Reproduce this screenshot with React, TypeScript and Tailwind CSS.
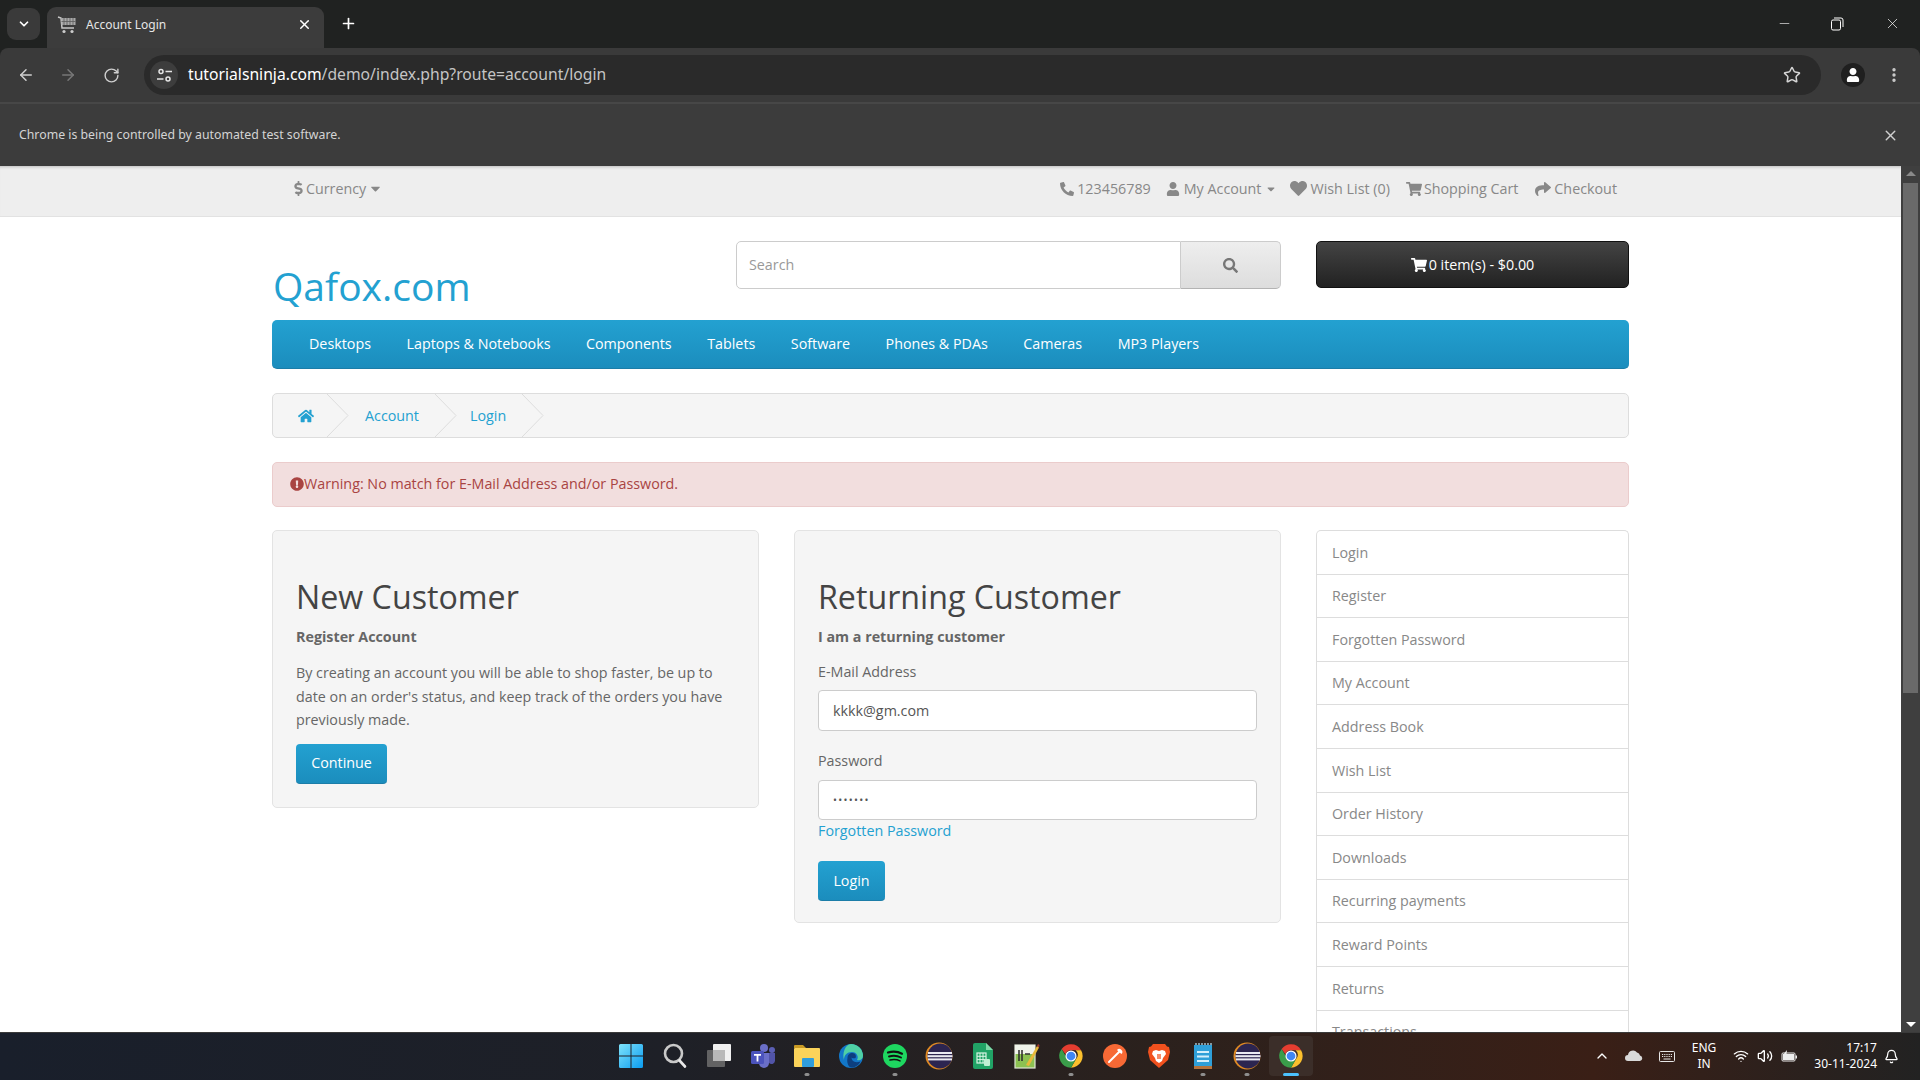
import React from "react";
import { FaPhone, FaUser, FaHeart, FaShoppingCart, FaShare, FaHome, FaSearch, FaExclamationCircle, FaCaretDown, FaDollarSign } from "react-icons/fa";
import { ChevronDown, X, Plus, ArrowLeft, ArrowRight, RotateCw, Star, EllipsisVertical, ChevronUp, Wifi, Volume2, Bell, Minus } from "lucide-react";

const side = ["Login","Register","Forgotten Password","My Account","Address Book","Wish List","Order History","Downloads","Recurring payments","Reward Points","Returns","Transactions"];
const nav = ["Desktops","Laptops & Notebooks","Components","Tablets","Software","Phones & PDAs","Cameras","MP3 Players"];

function Crumb() {
  return (
    <svg width="23" height="43" viewBox="0 0 23 43" className="shrink-0" fill="none">
      <path d="M1 0 L22 21.5 L1 43" stroke="#dddddd" strokeWidth="1" />
    </svg>
  );
}

function Chrome({ size = 32 }: { size?: number }) {
  return (
    <svg width={size} height={size} viewBox="0 0 48 48">
      <path d="M24 4a20 20 0 0 1 17.3 10H24a10 10 0 0 0-9.5 6.9L7.9 12A20 20 0 0 1 24 4z" fill="#e53d30" />
      <path d="M41.3 14A20 20 0 0 1 24 44l8.7-15a10 10 0 0 0-.7-15z" fill="#fbc02d" />
      <path d="M24 44A20 20 0 0 1 7.9 12l8.7 15A10 10 0 0 0 32.7 29L24 44z" fill="#3a9d4a" />
      <circle cx="24" cy="24" r="9.5" fill="#fff" />
      <circle cx="24" cy="24" r="7.5" fill="#3f86f4" />
    </svg>
  );
}

function Eclipse() {
  return (
    <svg width="28" height="28" viewBox="0 0 28 28">
      <circle cx="14" cy="14" r="13.5" fill="#e08a24" />
      <circle cx="15" cy="14" r="12.5" fill="#2c2550" />
      <rect x="3" y="10" width="24" height="2" fill="#e9e9f2" />
      <rect x="2.5" y="13.2" width="25" height="2" fill="#e9e9f2" />
      <rect x="3" y="16.4" width="24" height="2" fill="#e9e9f2" />
    </svg>
  );
}

function Cell({ children, dot, active }: { children: React.ReactNode; dot?: boolean; active?: boolean }) {
  return (
    <div className={`relative w-[44px] h-[40px] flex items-center justify-center rounded ${active ? "bg-[#3b2e29]" : ""}`}>
      {children}
      {dot && <span className="absolute bottom-[0px] left-1/2 -translate-x-1/2 w-[5px] h-[3px] rounded-full bg-[#8e8e8e]" />}
      {active && <span className="absolute bottom-[0px] left-1/2 -translate-x-1/2 w-[16px] h-[3px] rounded-full bg-[#4cc2ff]" />}
    </div>
  );
}

function Taskbar() {
  return (
    <div className="h-[48px] shrink-0 flex items-center pb-[1px] bg-[linear-gradient(90deg,#191f2b_0%,#1e2027_35%,#2b211d_60%,#3a1f16_83%,#222222_100%)] border-t border-[#3a3a3a] text-white font-['Noto_Sans',sans-serif]">
      <div className="ml-[609px] flex items-center">
        <Cell>
          <svg width="24" height="24" viewBox="0 0 24 24">
            <defs><linearGradient id="w" x1="0" y1="0" x2="1" y2="1"><stop offset="0" stopColor="#7fe3fb" /><stop offset="1" stopColor="#0a9cf0" /></linearGradient></defs>
            <path d="M0 1.5A1.5 1.5 0 0 1 1.5 0H11.5V11.5H0zM12.5 0H22.5A1.5 1.5 0 0 1 24 1.5V11.5H12.5zM0 12.5H11.5V24H1.5A1.5 1.5 0 0 1 0 22.5zM12.5 12.5H24V22.5A1.5 1.5 0 0 1 22.5 24H12.5z" fill="url(#w)" />
          </svg>
        </Cell>
        <Cell>
          <svg width="24" height="26" viewBox="0 0 24 26" fill="none">
            <circle cx="10.5" cy="10.5" r="8.5" stroke="#c9c9c9" strokeWidth="2.6" />
            <path d="M16.5 17.5L22 23.5" stroke="#e9e9e9" strokeWidth="2.6" strokeLinecap="round" />
          </svg>
        </Cell>
        <Cell>
          <svg width="24" height="24" viewBox="0 0 24 24">
            <rect x="6" y="0" width="18" height="17" rx="1" fill="#f0f0f0" />
            <rect x="0" y="6" width="18" height="17" rx="1" fill="#6f6f6f" fillOpacity="0.85" />
            <rect x="6" y="6" width="12" height="11" fill="#b8b8b8" />
          </svg>
        </Cell>
        <Cell>
          <svg width="26" height="26" viewBox="0 0 26 26">
            <circle cx="14" cy="5" r="4" fill="#6a6fc8" />
            <circle cx="22" cy="7" r="3" fill="#5b5fb5" />
            <path d="M9 10h10v10a5 5 0 0 1-10 0z" fill="#6a6fc8" />
            <path d="M19 10h6v8a3.500 3.500 0 0 1-6 2z" fill="#5154a8" />
            <rect x="1" y="8" width="13" height="13" rx="1.500" fill="#4b53bc" />
            <path d="M4 11h7v1.800H8.400V18.500H6.600V12.800H4z" fill="#fff" />
          </svg>
        </Cell>
        <Cell dot>
          <svg width="26" height="24" viewBox="0 0 26 24">
            <path d="M0 2a1 1 0 0 1 1-1h8l3 3H0z" fill="#c99a24" />
            <rect x="0" y="4" width="26" height="19" rx="1" fill="#fbd35a" />
            <rect x="8" y="14" width="12" height="9" rx="1" fill="#2f9ddc" />
          </svg>
        </Cell>
        <Cell>
          <svg width="24" height="24" viewBox="0 0 24 24">
            <circle cx="12" cy="12" r="12" fill="#1277c9" />
            <path d="M12 0a12 12 0 0 1 12 12c0 3-3 5-6 4 2-3 0-8-5-8-5 0-8 3-8 8-2-6 1-16 7-16z" fill="#4fd0a5" />
            <path d="M8.500 14c0-3 2-5 5-5 3 0 4 3 3 5-1 .5-3 .5-4-.5 0 3 3 6 9 4-2 4-6 6-9 6-3 0-5-5-4-9.500z" fill="#0d3f7f" />
          </svg>
        </Cell>
        <Cell dot>
          <svg width="24" height="24" viewBox="0 0 24 24" fill="none">
            <circle cx="12" cy="12" r="12" fill="#1ed760" />
            <path d="M5 8.500c5-1.500 10-1 14 1.200" stroke="#111" strokeWidth="2.200" strokeLinecap="round" />
            <path d="M6 12.500c4.500-1.200 8.500-.8 12 1" stroke="#111" strokeWidth="1.900" strokeLinecap="round" />
            <path d="M7 16c3.500-.8 7-.6 10 .9" stroke="#111" strokeWidth="1.600" strokeLinecap="round" />
          </svg>
        </Cell>
        <Cell><Eclipse /></Cell>
        <Cell>
          <svg width="20" height="26" viewBox="0 0 20 26">
            <path d="M2 0H13L20 7V24a2 2 0 0 1-2 2H2a2 2 0 0 1-2-2V2a2 2 0 0 1 2-2z" fill="#21a366" />
            <path d="M13 0L20 7H13z" fill="#7fd8a8" />
            <rect x="4" y="10" width="9" height="10" fill="none" stroke="#d9f5e5" strokeWidth="1.200" />
            <path d="M4 13.300h9M4 16.600h9M7 10v10M10 10v10" stroke="#d9f5e5" strokeWidth="1" />
            <rect x="11" y="16" width="6" height="7" rx="1" fill="#bff0d3" />
          </svg>
        </Cell>
        <Cell>
          <svg width="26" height="26" viewBox="0 0 26 26">
            <rect x="1" y="2" width="20" height="23" fill="#8cc152" stroke="#dfe6d8" strokeWidth="1.200" />
            <rect x="1" y="2" width="20" height="9" fill="#f0f3ea" />
            <path d="M5 7v11M8 7v11" stroke="#2a2a2a" strokeWidth="1.500" />
            <path d="M11 11h5" stroke="#333" strokeWidth="1.500" />
            <path d="M12 22L23 3l2 1.500L15 23z" fill="#e8b93a" />
            <path d="M23 3l1-2 1.500 1L25 4.500z" fill="#a33b2e" />
          </svg>
        </Cell>
        <Cell dot><Chrome size={28} /></Cell>
        <Cell>
          <svg width="24" height="24" viewBox="0 0 24 24" fill="none">
            <circle cx="12" cy="12" r="12" fill="#f76935" />
            <path d="M6 18L17 7" stroke="#fff" strokeWidth="2" strokeLinecap="round" />
            <path d="M14 6a3 3 0 0 1 4.500 4L16 8z" fill="#fff" />
          </svg>
        </Cell>
        <Cell>
          <svg width="22" height="26" viewBox="0 0 22 26">
            <path d="M5 1H17L19 3.500 21 4 22 9 20 17 11 25 2 17 0 9 1 4 3 3.500z" fill="#f1511e" />
            <path d="M5 8l3-1 3 1 3-1 3 1 1 3-3 4-1 3-3 2-3-2-1-3-3-4z" fill="#fff" />
            <path d="M10 11v5M12 11v5" stroke="#f1511e" strokeWidth="1.300" />
          </svg>
        </Cell>
        <Cell dot>
          <svg width="20" height="27" viewBox="0 0 20 27">
            <rect x="1" y="2" width="18" height="23" fill="#2f9fd8" />
            <rect x="1" y="23" width="18" height="3" fill="#b5733b" />
            <path d="M3 2V0M6 2V0M9 2V0M12 2V0M15 2V0M18 2V0" stroke="#bfe4f6" strokeWidth="1.200" />
            <rect x="4" y="8" width="12" height="2" fill="#d5eefa" />
            <rect x="4" y="12.500" width="12" height="2" fill="#d5eefa" />
            <rect x="4" y="17" width="12" height="2" fill="#d5eefa" />
          </svg>
        </Cell>
        <Cell dot><Eclipse /></Cell>
        <Cell active><Chrome size={28} /></Cell>
      </div>
      <div className="ml-auto flex items-center h-full text-[12px] leading-[16px]">
        <ChevronUp size={16} strokeWidth={2} className="mr-[15px]" />
        <svg width="18" height="12" viewBox="0 0 18 12" className="mr-[16px]">
          <path d="M3 11a3 3 0 0 1 0-6 5 5 0 0 1 9-2.500A4 4 0 0 1 15 5.500 2.800 2.800 0 0 1 15 11z" fill="#d9d9d9" />
        </svg>
        <svg width="16" height="11" viewBox="0 0 16 11" fill="none" className="mr-[16px]">
          <rect x=".5" y=".5" width="15" height="10" rx="1" stroke="#e6e6e6" />
          <path d="M3 3.500h10M3 5.500h10" stroke="#e6e6e6" strokeDasharray="1.200 1" />
          <path d="M4.500 8h7" stroke="#e6e6e6" />
        </svg>
        <div className="flex flex-col items-center w-[26px] mr-[16px]">
          <span>ENG</span>
          <span>IN</span>
        </div>
        <Wifi size={16} className="mr-[8px]" />
        <Volume2 size={16} className="mr-[8px]" />
        <svg width="17" height="13" viewBox="0 0 17 13" fill="none" className="mr-[17px]">
          <rect x="1" y="3" width="13" height="8" rx="1" stroke="#eee" />
          <rect x="14.500" y="5.500" width="1.500" height="3" fill="#eee" />
          <path d="M3 3.500L6 0 5.500 4H10L6 8z" fill="#eee" />
          <rect x="2" y="4" width="11" height="6" fill="#eee" />
        </svg>
        <div className="flex flex-col items-end w-[62px] mr-[7px] whitespace-nowrap">
          <span>17:17</span>
          <span>30-11-2024</span>
        </div>
        <Bell size={15} className="mr-[21px]" />
      </div>
    </div>
  );
}

export default function App() {
  return (
    <div className="w-[1920px] h-[1080px] overflow-hidden flex flex-col bg-[#202221] font-['Open_Sans',sans-serif] text-[14.3px] text-[#666666]">
      {/* tab strip */}
      <div className="h-[48px] shrink-0 bg-[#202221] flex items-end pl-[7px] text-white font-['Noto_Sans',sans-serif]">
        <div className="w-[33px] h-[32px] mb-[8px] rounded-[9px] bg-[#3a3a3a] flex items-center justify-center">
          <ChevronDown size={14} strokeWidth={3} />
        </div>
        <div className="ml-[7px] w-[277px] h-[41px] bg-[#3c3c3c] rounded-t-[9px] flex items-center pl-[10px] pr-[12px] pb-[6px]">
          <svg width="20" height="20" viewBox="0 0 20 20" className="shrink-0">
            <path d="M1 2l3 1 1 10h12" fill="none" stroke="#c8c8c8" strokeWidth="1.500" />
            <rect x="4.500" y="3" width="14" height="7" fill="#a8a8a8" />
            <path d="M7 3v7M10 3v7M13 3v7M16 3v7M4.500 6.500h14" stroke="#5c5c5c" strokeWidth=".8" />
            <circle cx="7" cy="16.500" r="1.600" fill="#ccc" />
            <circle cx="15" cy="16.500" r="1.600" fill="#ccc" />
          </svg>
          <span className="ml-[9px] text-[12px] text-[#e6e6e6] flex-1">Account Login</span>
          <X size={15} strokeWidth={2.4} />
        </div>
        <Plus size={17} strokeWidth={2.4} className="ml-[16px] mb-[16px]" />
        <div className="ml-auto h-full flex items-center text-white pr-[19px] pb-[1px]">
          <Minus size={15} strokeWidth={1} className="mr-[39px]" />
          <svg width="13" height="14" viewBox="0 0 13 14" fill="none" stroke="#fff" strokeWidth="1" className="mr-[40px]">
            <rect x=".5" y="3" width="9" height="10" rx="1.500" />
            <path d="M3 1h7a2 2 0 0 1 2 2v7" />
          </svg>
          <X size={17} strokeWidth={1} />
        </div>
      </div>
      {/* toolbar */}
      <div className="h-[54px] shrink-0 bg-[#3a3a3a] rounded-t-[8px] flex items-center pl-[17px] text-[#c7c7c7] font-['Noto_Sans',sans-serif]">
        <ArrowLeft size={18} strokeWidth={2} className="text-[#d0d0d0]" />
        <ArrowRight size={18} strokeWidth={2} className="ml-[24px] text-[#777777]" />
        <RotateCw size={17} strokeWidth={2} className="ml-[26px] text-[#cfcfcf]" />
        <div className="ml-[24px] w-[1677px] h-[40px] rounded-full bg-[#2a2a2a] flex items-center pl-[6px] pr-[20px]">
          <div className="w-[28px] h-[28px] rounded-full bg-[#3d3d3d] flex items-center justify-center">
            <svg width="15" height="15" viewBox="0 0 15 15" fill="none" stroke="#e5e5e5" strokeWidth="1.500">
              <circle cx="4" cy="3.500" r="2" />
              <path d="M8.500 3.500H15M0 11H6.500" />
              <circle cx="11" cy="11" r="2" />
            </svg>
          </div>
          <div className="ml-[10px] text-[15.7px] whitespace-nowrap">
            <span className="text-white">tutorialsninja.com</span>
            <span className="text-[#c5c5c5]">/demo/index.php?route=account/login</span>
          </div>
          <Star size={18} strokeWidth={2} className="ml-auto text-[#d5d5d5]" />
        </div>
        <div className="ml-[20px] w-[24px] h-[24px] rounded-full bg-[#1f1f1f] flex items-center justify-center overflow-hidden">
          <FaUser size={14} className="text-white" />
        </div>
        <EllipsisVertical size={18} strokeWidth={2.500} className="ml-[20px] text-[#cfcfcf]" />
      </div>
      {/* infobar */}
      <div className="h-[64px] shrink-0 bg-[#3c3c3c] border-t-2 border-[#474747] flex items-center pl-[19px] pr-[21px] text-[12.3px] text-[#d4d4d4] font-['Noto_Sans',sans-serif]">
        <span>Chrome is being controlled by automated test software.</span>
        <X size={17} strokeWidth={2} className="ml-auto text-[#d0d0d0]" />
      </div>
      {/* viewport */}
      <div className="flex-1 min-h-0 flex bg-white">
        <div className="flex-1 min-w-0 overflow-hidden">
          <div className="h-[51px] bg-[#eeeeee] border-b border-[#e2e2e2] shadow-[inset_0_3px_3px_-2px_rgba(0,0,0,0.2)]">
            <div className="ml-[272px] w-[1357px] h-full flex items-center justify-between pl-[19px] pr-[12px] pb-[5px] text-[#888888]">
              <div className="flex items-center">
                <FaDollarSign size={15} />
                <span>Currency</span>
                <FaCaretDown size={15} className="ml-[2px]" />
              </div>
              <div className="flex items-center">
                <FaPhone size={14} className="-scale-x-100" />
                <span className="ml-[3px]">123456789</span>
                <FaUser size={14} className="ml-[15px]" />
                <span className="ml-[4px]">My Account</span>
                <FaCaretDown size={12} className="ml-[4px]" />
                <FaHeart size={17} className="ml-[13px]" />
                <span className="ml-[3px]">Wish List (0)</span>
                <FaShoppingCart size={16} className="ml-[16px]" />
                <span className="ml-[2px]">Shopping Cart</span>
                <FaShare size={16} className="ml-[17px]" />
                <span className="ml-[3px]">Checkout</span>
              </div>
            </div>
          </div>
          <div className="ml-[272px] w-[1357px]">
            {/* header */}
            <div className="h-[103px] pt-[24px] flex items-start">
              <div className="w-[464px] text-[39px] leading-[50px] pt-[20px] pl-[1px] text-[#23a1d1]">Qafox.com</div>
              <div className="w-[545px] h-[48px] flex">
                <input readOnly placeholder="Search" className="flex-1 min-w-0 h-full bg-white border border-[#cccccc] rounded-l-[5px] px-[12px] pb-[1px] text-[14.300px] placeholder:text-[#999999] outline-none" />
                <div className="w-[100px] h-full border border-l-0 border-[#cccccc] border-b-[#b3b3b3] rounded-r-[5px] bg-gradient-to-b from-[#eeeeee] to-[#dddddd] flex items-center justify-center text-[#777777]">
                  <FaSearch size={15} />
                </div>
              </div>
              <div className="ml-[35px] w-[313px] h-[47px] rounded-[5px] border border-[#111111] bg-gradient-to-b from-[#444444] to-[#222222] flex items-center justify-center text-white">
                <FaShoppingCart size={16} />
                <span className="ml-[2px]">0 item(s) - $0.00</span>
              </div>
            </div>
            {/* nav */}
            <div className="h-[49px] rounded-[5px] border-b border-[#1b7da8] bg-gradient-to-b from-[#23a1d1] to-[#1b8dbd] flex items-center pl-[37px] gap-[35.500px] text-white">
              {nav.map((n) => (
                <span key={n} className="whitespace-nowrap">{n}</span>
              ))}
            </div>
            {/* breadcrumb */}
            <div className="mt-[24px] h-[45px] bg-[#f5f5f5] border border-[#dddddd] rounded-[5px] flex items-center pl-[25px] text-[#23a1d1]">
              <FaHome size={16} />
              <div className="ml-[12px]"><Crumb /></div>
              <span className="ml-[16px]">Account</span>
              <div className="ml-[15px]"><Crumb /></div>
              <span className="ml-[13px]">Login</span>
              <div className="ml-[15px]"><Crumb /></div>
            </div>
            {/* alert */}
            <div className="mt-[24px] h-[45px] bg-[#f2dede] border border-[#ebcccc] rounded-[5px] flex items-center pl-[17px] pb-[1px] text-[#a94442]">
              <FaExclamationCircle size={14} />
              <span>Warning: No match for E-Mail Address and/or Password.</span>
            </div>
            {/* columns */}
            <div className="mt-[23px] flex items-start gap-[35px]">
              <div className="w-[487px] h-[278px] bg-[#f5f5f5] border border-[#e3e3e3] rounded-[5px] px-[23px] pt-[41px]">
                <h2 className="text-[32.2px] leading-[50px] text-[#444444]">New Customer</h2>
                <p className="mt-[5px] leading-[20px] font-bold">Register Account</p>
                <p className="mt-[14px] leading-[23.500px]">By creating an account you will be able to shop faster, be up to date on an order's status, and keep track of the orders you have previously made.</p>
                <div className="mt-[12px] w-[91px] h-[40px] rounded-[4px] border-b border-[#1b7da8] bg-gradient-to-b from-[#23a1d1] to-[#1b8dbd] text-white flex items-center justify-center">Continue</div>
              </div>
              <div className="w-[487px] h-[393px] bg-[#f5f5f5] border border-[#e3e3e3] rounded-[5px] px-[23px] pt-[41px]">
                <h2 className="text-[32.2px] leading-[50px] text-[#444444]">Returning Customer</h2>
                <p className="mt-[5px] leading-[20px] font-bold">I am a returning customer</p>
                <label className="block mt-[15px] leading-[20px]">E-Mail Address</label>
                <input readOnly defaultValue="kkkk@gm.com" className="block mt-[8px] w-[439px] h-[41px] bg-white border border-[#cccccc] rounded-[4px] px-[14px] text-[14.300px] text-[#555555] outline-none" />
                <label className="block mt-[20px] leading-[20px]">Password</label>
                <input readOnly type="password" defaultValue="1234567" className="block mt-[9px] w-[439px] h-[40px] bg-white border border-[#cccccc] rounded-[4px] px-[14px] text-[10.500px] tracking-[1.300px] text-[#555555] outline-none" />
                <div className="mt-[1px] leading-[20px] text-[#23a1d1]">Forgotten Password</div>
                <div className="mt-[20px] w-[67px] h-[40px] rounded-[4px] border-b border-[#1b7da8] bg-gradient-to-b from-[#23a1d1] to-[#1b8dbd] text-white flex items-center justify-center">Login</div>
              </div>
              <div className="w-[313px] border-x border-t border-[#dddddd] rounded-t-[5px] bg-white">
                {side.map((s) => (
                  <div key={s} className="h-[43.600px] border-b border-[#dddddd] flex items-center pl-[15px] text-[#888888]">{s}</div>
                ))}
              </div>
            </div>
          </div>
        </div>
        {/* scrollbar */}
        <div className="w-[19px] shrink-0 bg-[#3f3f3f] flex flex-col items-center">
          <div className="h-[15px] flex items-center justify-center">
            <div className="w-0 h-0 border-x-[5px] border-x-transparent border-b-[5px] border-b-[#8a8a8a]" />
          </div>
          <div className="w-[15px] h-[510px] bg-[#6a6a6a] mt-[2px]" />
          <div className="mt-auto h-[15px] flex items-center justify-center">
            <div className="w-0 h-0 border-x-[5px] border-x-transparent border-t-[5px] border-t-white" />
          </div>
        </div>
      </div>
      <Taskbar />
    </div>
  );
}
